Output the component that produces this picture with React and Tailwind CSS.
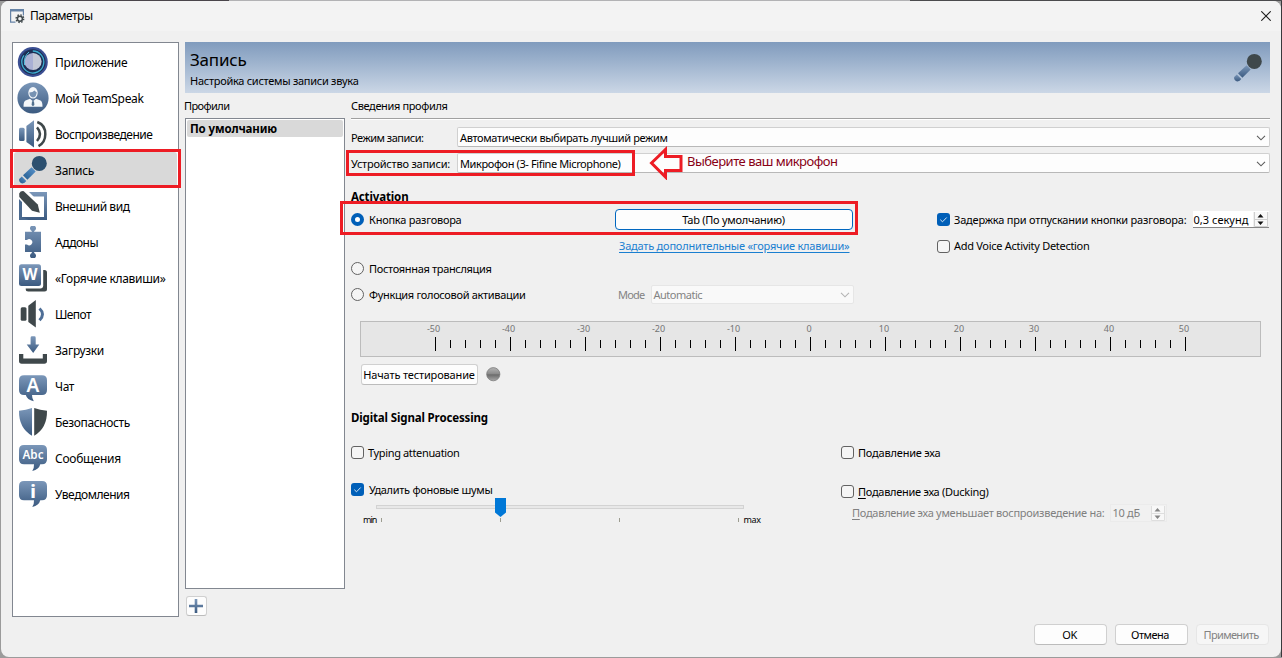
import { useLayoutEffect, useRef, useState } from 'react';

// A single line of text whose tracking is tuned so that it spans a given width.
function Fit({ w, className = '', children }) {
  const ref = useRef(null);
  const [tracking, setTracking] = useState(0);
  useLayoutEffect(() => {
    const el = ref.current;
    const natural = el.getBoundingClientRect().width;
    setTracking((w - 0.5 - natural) / el.textContent.length);
  }, [w]);
  return (
    <span ref={ref} className={`inline-block shrink-0 whitespace-nowrap ${className}`} style={{ letterSpacing: `${tracking}px` }}>
      {children}
    </span>
  );
}

function Gradients() {
  return (
    <svg width="0" height="0" className="absolute">
      <defs>
        <linearGradient id="steel" x1="0" y1="0" x2="0" y2="1">
          <stop offset="0" stopColor="#7b97b9" />
          <stop offset="1" stopColor="#3b5a80" />
        </linearGradient>
        <linearGradient id="blue" x1="1" y1="0" x2="0" y2="1">
          <stop offset="0" stopColor="#5b96cf" />
          <stop offset="1" stopColor="#235a8c" />
        </linearGradient>
        <linearGradient id="led" x1="0" y1="0" x2="0" y2="1">
          <stop offset="0" stopColor="#b5b5b5" />
          <stop offset="0.45" stopColor="#8c8c8c" />
          <stop offset="0.55" stopColor="#6c6c6c" />
          <stop offset="1" stopColor="#a8a8a8" />
        </linearGradient>
        <linearGradient id="disc" x1="0" y1="0" x2="1" y2="0">
          <stop offset="0.5" stopColor="#a9b0d4" />
          <stop offset="0.5" stopColor="#c3c8d6" />
        </linearGradient>
      </defs>
    </svg>
  );
}

const DARK = '#3f484b';

const Mic = ({ head, body }) => (
  <>
    <circle cx="22.3" cy="9.4" r="7.5" fill={head} />
    <path d="M14.6 13.2 18.7 17.6 10.4 25.7 6 21.3Z" fill={body} />
    <path d="M4.8 22.4 9.3 27.1Q7.5 29.9 4.5 29.3 1.6 28.2 2.2 25.1Z" fill={body} />
  </>
);

const icons = {
  app: (
    <>
      <circle cx="15.8" cy="16" r="15" fill="#3b4f93" />
      <circle cx="15.8" cy="16" r="12.8" fill="#1d2f55" />
      <path d="M15.8 5A11 11 0 1 1 7 9.4" fill="none" stroke="#3fb0d3" strokeWidth="1.3" />
      <circle cx="16" cy="15.5" r="8.6" fill="url(#disc)" />
      <path d="M12 6Q6.2 11 7.6 19" fill="none" stroke="#56c0dd" strokeWidth="1" />
    </>
  ),
  user: (
    <>
      <circle cx="16" cy="16" r="15.6" fill="url(#steel)" />
      <ellipse cx="16" cy="10.8" rx="4.7" ry="5.8" fill="#f4f7fa" />
      <path d="M12.3 10.5Q16 10.5 17.5 8.4 19 10 19.7 10.2 19.5 15 16 15.6 12.7 15 12.3 10.5Z" fill="#7793b3" />
      <path d="M6.5 24.8Q6.5 19.5 8.5 18.6L13 16.8 16 19.3 19 16.8 23.5 18.6Q25.5 19.5 25.5 24.8Z" fill="#f4f7fa" />
      <path d="M15 19.3H17L17.4 23 16 24.3 14.6 23Z" fill="#53718f" />
    </>
  ),
  playback: (
    <>
      <rect x="2" y="9.7" width="5.6" height="13.4" rx="1.5" fill="url(#steel)" />
      <path d="M9.4 8 17 2.3V29.6L9.4 23.9Z" fill="url(#steel)" />
      <path d="M20 9.3Q26 16 20 23M20.3 4Q28.5 7 28.3 16.3 28.3 24.5 21.5 28.2" fill="none" stroke={DARK} strokeWidth="2.5" />
    </>
  ),
  mic: <Mic head="#2c5070" body="url(#blue)" />,
  design: (
    <>
      <path d="M2 2H30V30H2ZM5 6.5V27H27V6.5Z" fill="url(#steel)" fillRule="evenodd" />
      <path d="M2 -1 12 2 24.5 14.5V25L14 22.5 -1 8Z" fill="#fff" />
      <path d="M2.2 3.5Q3.5 0.7 6.8 1.2L20.8 14.6 22.8 22.8 15 20.8 2.3 7Z" fill={DARK} />
      <path d="M2 9V30H12L5 27V12Z" fill="#4a6a90" />
    </>
  ),
  addon: (
    <path d="M8 5.8H14.8V5A3 3 0 1 1 17.2 5V5.8H24V26H17.2V27A3 3 0 1 1 14.8 27V26H8V18.5H10A3.1 3.1 0 1 0 10 14H8Z" fill="url(#steel)" />
  ),
  hotkey: (
    <>
      <rect x="8.7" y="8" width="21.3" height="21.6" rx="2.5" fill={DARK} />
      <rect x="1" y="1" width="25.2" height="25.4" rx="3" fill="#fff" />
      <rect x="2" y="2.3" width="22" height="21.7" rx="2.5" fill="url(#steel)" />
      <text x="13" y="18.4" textAnchor="middle" fontSize="16" fontWeight="700" fill="#fff" fontFamily="Noto Sans, sans-serif" textLength="15" lengthAdjust="spacingAndGlyphs">W</text>
    </>
  ),
  whisper: (
    <>
      <rect x="3.7" y="9.3" width="5.8" height="13.4" rx="1.5" fill={DARK} />
      <path d="M11.3 7.8 18.8 2V29.6L11.3 24Z" fill={DARK} />
      <path d="M22.5 10.5Q28.5 16 22.5 22.3" fill="none" stroke="#4f6f97" strokeWidth="3" />
    </>
  ),
  download: (
    <>
      <path d="M13.6 3.7Q13.6 2.3 15 2.3H17.3Q18.7 2.3 18.7 3.7V10.5H22.3L16.2 19 9.7 10.5H13.6Z" fill="url(#steel)" />
      <path d="M2 20H6.3V24.5H25.8V20H30V27Q30 29.7 27.3 29.7H4.7Q2 29.7 2 27Z" fill={DARK} />
    </>
  ),
  chat: (
    <>
      <path d="M7 5.3H25Q30 5.3 30 10.3V20Q30 25 25 25H15Q15 28.5 16.8 31.2 10 29.8 8.8 25H7Q2 25 2 20V10.3Q2 5.3 7 5.3Z" fill="url(#steel)" />
      <text x="16" y="22" textAnchor="middle" fontSize="19" fontWeight="600" fill="#fff" fontFamily="Noto Sans, sans-serif">A</text>
    </>
  ),
  shield: (
    <>
      <path d="M15 2Q9 4 2 4.8 1.7 22 15 29.8Z" fill="url(#steel)" />
      <path d="M17.2 2Q23 4 30 4.8 30.3 22 17.2 29.8Z" fill={DARK} />
    </>
  ),
  messages: (
    <>
      <path d="M7 3H25Q30 3 30 8V17.3Q30 22.3 25 22.3H23.3Q22 27.5 15.3 29 17.3 25.5 17 22.3H7Q2 22.3 2 17.3V8Q2 3 7 3Z" fill="url(#steel)" />
      <text x="16" y="17.3" textAnchor="middle" fontSize="12" fontWeight="600" fill="#fff" fontFamily="Noto Sans, sans-serif" textLength="21" lengthAdjust="spacingAndGlyphs">Abc</text>
    </>
  ),
  notify: (
    <>
      <path d="M7 3H25Q30 3 30 8V17.3Q30 22.3 25 22.3H23.3Q22 27.5 15.3 29 17.3 25.5 17 22.3H7Q2 22.3 2 17.3V8Q2 3 7 3Z" fill="url(#steel)" />
      <text x="16" y="19.5" textAnchor="middle" fontSize="18" fontWeight="800" fill="#fff" fontFamily="Noto Sans, sans-serif">i</text>
    </>
  ),
};

const nav = [
  ['app', 'Приложение', 73],
  ['user', 'Мой TeamSpeak', 89],
  ['playback', 'Воспроизведение', 98],
  ['mic', 'Запись', 39.5],
  ['design', 'Внешний вид', 75],
  ['addon', 'Аддоны', 43.5],
  ['hotkey', '«Горячие клавиши»', 111],
  ['whisper', 'Шепот', 36.5],
  ['download', 'Загрузки', 49.5],
  ['chat', 'Чат', 19.5],
  ['shield', 'Безопасность', 75.5],
  ['messages', 'Сообщения', 66.5],
  ['notify', 'Уведомления', 75],
];

function Radio({ checked }) {
  return checked ? (
    <span className="h-[13px] w-[13px] shrink-0 rounded-full border-4 border-[#005fb8] bg-white" />
  ) : (
    <span className="h-[13px] w-[13px] shrink-0 rounded-full border border-[#626262] bg-[#f5f5f5]" />
  );
}

function Check({ checked }) {
  return checked ? (
    <span className="flex h-[13px] w-[13px] shrink-0 items-center justify-center rounded-[3px] bg-[#005fb8]">
      <svg width="9" height="9" viewBox="0 0 9 9"><path d="M1.3 4.7 3.5 6.8 7.7 2.5" fill="none" stroke="#d5e6f5" strokeWidth="1" /></svg>
    </span>
  ) : (
    <span className="h-[13px] w-[13px] shrink-0 rounded-[3px] border border-[#626262] bg-[#f5f5f5]" />
  );
}

function Chevron({ color }) {
  return (
    <svg width="10" height="6" viewBox="0 0 10 6" className="mt-px shrink-0"><path d="M1 0.8 5 4.8 9 0.8" fill="none" stroke={color} strokeWidth="1.1" /></svg>
  );
}

function Combo({ w, children }) {
  return (
    <div className="flex h-5 grow items-center justify-between rounded-[2px] border border-[#d0d0d0] border-b-[#b8b8b8] bg-[#fdfdfd] pr-[3px] pl-[2px]">
      <Fit w={w} className="pt-0.5">{children}</Fit>
      <Chevron color="#5c5c5c" />
    </div>
  );
}

function Stepper({ color, line }) {
  return (
    <svg width="14" height="15" viewBox="0 0 14 15" className="shrink-0">
      <rect x="0" y="0" width="14" height="15" fill="#f8f8f8" />
      <path d="M0.5 0V14.5H13.5V0M0 7.5H14" fill="none" stroke={line} />
      <path d="M3.5 5.5 6.5 2 9.5 5.5ZM3.5 9.5 6.5 13 9.5 9.5Z" fill={color} />
    </svg>
  );
}

function Meter() {
  const ticks = Array.from({ length: 51 }, (_, i) => i);
  return (
    <svg width="901" height="36" viewBox="0 0 901 36" className="mt-4 ml-[9px] block shrink-0">
      <rect x="0.5" y="0.5" width="900" height="35" fill="#e6e6e6" stroke="#bcbcbc" />
      {ticks.map((i) => {
        const major = i % 5 === 0;
        return <rect key={i} x={75 + i * 15} y={major ? 16 : 19} width="1" height={major ? 14 : 8} fill="#000" />;
      })}
      {ticks.filter((i) => i % 5 === 0).map((i) => (
        <text key={i} x={(i >= 25 ? 74 : 73.5) + i * 15} y="11" textAnchor="middle" fontSize="9" fill="#747474">{i * 2 - 50}</text>
      ))}
    </svg>
  );
}

function Slider() {
  return (
    <div className="flex h-[26px] items-end">
      <Fit w={14} className="ml-3 text-[9px] leading-[12px]">min</Fit>
      <div className="ml-[-1px] flex h-full w-[368px] flex-col">
        <div className="relative mt-[5px] h-1 w-[368px] shrink-0 border border-[#d3d3d3] bg-[#e8e8e8]">
          <svg width="11" height="19" viewBox="0 0 11 19" className="absolute top-[-8px] left-[118px]"><path d="M0 0H11V14.5L5.5 19 0 14.5Z" fill="#0078d7" /></svg>
        </div>
        <div className="mt-[9px] flex justify-between pr-[5px] pl-[5px]">
          <span className="h-1 w-px bg-[#9c9c90]" />
          <span className="h-1 w-px bg-[#9c9c90]" />
          <span className="h-1 w-px bg-[#9c9c90]" />
          <span className="h-1 w-px bg-[#9c9c90]" />
        </div>
      </div>
      <Fit w={17.5} className="text-[9px] leading-[12px]">max</Fit>
    </div>
  );
}

function ProfileDetails() {
  return (
    <section className="ml-[6px] flex w-[919px] flex-col">
      <div className="h-[22px] leading-5"><Fit w={97}>Сведения профиля</Fit></div>
      <div className="h-0.5 shrink-0 border-t border-b border-t-[#a0a0a0] border-b-white" />
      <div className="mt-[7px] flex h-5 items-center"><div className="w-[106px] pt-0.5 leading-5"><Fit w={73}>Режим записи:</Fit></div><Combo w={208}>Автоматически выбирать лучший режим</Combo></div>
      <div className="mt-[6px] flex h-5 items-center"><div className="w-[106px] pt-0.5 leading-5"><Fit w={99.5}>Устройство записи:</Fit></div><Combo w={161}>Микрофон (3- Fifine Microphone)</Combo></div>
      <div className="mt-[13px] h-5 text-[11.5px] leading-[21px] font-bold"><Fit w={58}>Activation</Fit></div>

      <div className="mt-[3px] flex h-[21px] items-center">
        <Radio checked />
        <div className="ml-[5px] w-[246px]"><Fit w={93}>Кнопка разговора</Fit></div>
        <button className="flex h-[21px] w-[238px] items-center justify-center rounded-[4px] border border-[#0067c0] bg-[#fdfdfd] pr-px"><Fit w={103}>Tab (По умолчанию)</Fit></button>
        <div className="ml-[84px] flex items-center gap-1"><Check checked /><Fit w={233}>Задержка при отпускании кнопки разговора:</Fit></div>
        <div className="ml-[6px] flex h-[17px] w-[76px] items-center border-b border-[#868686] bg-white">
          <Fit w={55.5} className="ml-px pt-px">0,3 секунд</Fit>
          <div className="ml-auto flex bg-[#f0f0f0] px-px"><Stepper color="#111" line="#cfcfcf" /></div>
        </div>
      </div>
      <div className="mt-[6px] flex h-5 items-center">
        <div className="w-[318px] pl-[268px]"><Fit w={231} className="text-[#1a7fd0] underline underline-offset-2">Задать дополнительные «горячие клавиши»</Fit></div>
        <div className="ml-[268px] flex items-center gap-1"><Check /><Fit w={136}>Add Voice Activity Detection</Fit></div>
      </div>
      <div className="mt-[2px] flex h-[21px] items-center gap-[5px]"><Radio /><Fit w={123}>Постоянная трансляция</Fit></div>
      <div className="mt-[5px] flex h-[21px] items-center text-[#838383]">
        <Radio />
        <div className="ml-[5px] w-[249px] text-black"><Fit w={157}>Функция голосовой активации</Fit></div>
        <Fit w={27}>Mode</Fit>
        <div className="ml-[6px] flex h-[19px] w-[203px] items-center justify-between rounded-[2px] border border-[#e6e6e6] bg-[#f9f9f9] pr-[3px] pl-[2px]"><Fit w={49}>Automatic</Fit><Chevron color="#b4b4b4" /></div>
      </div>
      <Meter />
      <div className="mt-[7px] flex h-[21px] items-center">
        <button className="ml-[10px] flex h-[21px] w-[117px] items-center justify-center rounded-[3px] border border-[#d0d0d0] border-b-[#bcbcbc] bg-[#fdfdfd] pr-px"><Fit w={112}>Начать тестирование</Fit></button>
        <svg width="15" height="15" viewBox="0 0 15 15" className="ml-2"><circle cx="7.3" cy="7.2" r="6.6" fill="url(#led)" stroke="#7c7c7c" strokeWidth="0.8" /></svg>
      </div>
      <div className="mt-[22px] h-[21px] text-[11.5px] leading-[22px] font-bold"><Fit w={137.5}>Digital Signal Processing</Fit></div>
      <div className="mt-[14px] flex">
        <div className="w-[490px]">
          <div className="flex h-[21px] items-center gap-1"><Check /><Fit w={92}>Typing attenuation</Fit></div>
          <div className="mt-4 flex h-[21px] items-center gap-[5px]"><Check checked /><Fit w={124}>Удалить фоновые шумы</Fit></div>
          <Slider />
        </div>
        <div>
          <div className="flex h-[21px] items-center gap-1"><Check /><Fit w={83}>Подавление эха</Fit></div>
          <div className="mt-[18px] flex h-[21px] items-center gap-1"><Check /><Fit w={131}><u className="underline-offset-2">П</u>одавление эха (Ducking)</Fit></div>
          <div className="mt-px ml-[11px] flex h-5 items-center text-[#808080]">
            <Fit w={253}><u className="underline-offset-2">П</u>одавление эха уменьшает воспроизведение на:</Fit>
            <div className="ml-[5px] flex h-[18px] w-[57px] items-center justify-between border border-[#ebebeb] bg-[#f1f1f1] pr-px pl-[2px]"><Fit w={28}>10 дБ</Fit><Stepper color="#858585" line="#dedede" /></div>
          </div>
        </div>
      </div>
    </section>
  );
}

export default function App() {
  return (
    <div className="relative h-[658px] w-[1282px] overflow-hidden bg-[#9b9b9b] font-['Noto_Sans','DejaVu_Sans',sans-serif] text-[11px] leading-4 text-black">
      <Gradients />
      <div className="flex h-px"><div className="w-[229px] bg-[#4a454b]" /><div className="grow bg-[#b2b2b4]" /><div className="w-[372px] bg-[#4b4b4d]" /></div>
      <div className="flex h-[656px] bg-[#9b9b9b]">
        <main className="ml-px flex w-[1280px] flex-col rounded-[8px] bg-[#f0f0f0]">
          <header className="flex h-[30px] shrink-0 items-center rounded-t-[8px] bg-[#f3f3f3] pr-[10px] pl-[9px]">
            <svg width="15" height="15" viewBox="0 0 15 15">
              <path d="M0 0H14V6.5H12.8V2.6H1.2V12.5H5.5V13.7H0Z" fill="#6683a6" />
              <circle cx="9.9" cy="9.7" r="2.5" fill="none" stroke={DARK} strokeWidth="1.5" />
              <circle cx="9.9" cy="9.7" r="3.8" fill="none" stroke={DARK} strokeWidth="1.4" strokeDasharray="1.49 1.49" />
            </svg>
            <Fit w={63} className="ml-[5px] text-[12px]">Параметры</Fit>
            <svg width="10" height="10" viewBox="0 0 10 10" className="ml-auto"><path d="M0.3 0.3 9.7 9.7M9.7 0.3 0.3 9.7" stroke="#1d1d1d" strokeWidth="1.1" /></svg>
          </header>
          <div className="mt-[11px] flex h-[576px] pl-[11px]">
            <nav className="h-[575px] w-[167px] border border-[#828790] bg-white p-px">
              {nav.map(([id, label, w]) => (
                <div key={id} className={`flex h-9 items-center pl-[3px] text-[12px] ${id === 'mic' ? 'rounded-[3px] bg-[#d9d9d9]' : ''}`}>
                  <svg width="32" height="32" viewBox="0 0 32 32" className="shrink-0">{icons[id]}</svg>
                  <Fit w={w} className="ml-[6px] pt-0.5">{label}</Fit>
                </div>
              ))}
            </nav>
            <div className="ml-[6px] w-[1085px]">
              <div className="flex h-[51px] items-center justify-between bg-linear-to-b from-[#809bbd] to-[#cbd7e6] pr-[6px] pl-[5px]">
                <div className="flex flex-col items-start">
                  <Fit w={57} className="text-[17px] leading-[26px]">Запись</Fit>
                  <Fit w={169} className="leading-4">Настройка системы записи звука</Fit>
                </div>
                <svg width="32" height="32" viewBox="0 0 32 32"><Mic head={DARK} body="url(#steel)" /></svg>
              </div>
              <div className="mt-[3px] flex">
                <section className="w-40">
                  <div className="ml-[-1px] h-[22px] leading-5"><Fit w={46}>Профили</Fit></div>
                  <div className="h-[471px] w-40 border border-[#828790] bg-white p-px">
                    <div className="h-[17px] rounded-[2px] bg-[#d9d9d9] pl-[3px] text-[11.5px] leading-[18px] font-bold"><Fit w={87.5}>По умолчанию</Fit></div>
                  </div>
                  <button className="mt-[7px] ml-px flex h-5 w-[21px] items-center justify-center rounded-[3px] border border-[#d0d0d0] border-b-[#bcbcbc] bg-[#fdfdfd] pr-px">
                    <svg width="14" height="14" viewBox="0 0 14 14"><path d="M5.7 0H8.3V5.7H14V8.3H8.3V14H5.7V8.3H0V5.7H5.7Z" fill="url(#steel)" /></svg>
                  </button>
                </section>
                <ProfileDetails />
              </div>
            </div>
          </div>
          <footer className="mt-[6px] flex h-[21px] justify-end gap-2 pr-[12px]">
            <button className="flex w-[73px] items-center justify-center rounded-[4px] border border-[#d0d0d0] border-b-[#bcbcbc] bg-[#fdfdfd] pr-0.5"><Fit w={15}>OK</Fit></button>
            <button className="flex w-[73px] items-center justify-center rounded-[4px] border border-[#d0d0d0] border-b-[#bcbcbc] bg-[#fdfdfd] pr-[3px]"><Fit w={38.5}>Отмена</Fit></button>
            <button className="flex w-[73px] items-center justify-center rounded-[4px] border border-[#e6e6e6] bg-[#f6f6f6] pr-[3px] text-[#838383]"><Fit w={55.5}>Применить</Fit></button>
          </footer>
        </main>
        <div className="w-px bg-[#39393c]" />
      </div>

      {/* Annotations drawn over the window */}
      <div className="absolute top-[149px] left-[10px] h-[39px] w-[171px] border-3 border-[#ed1c24]" />
      <div className="absolute top-[150px] left-[346px] h-[26px] w-[289px] border-3 border-[#ed1c24]" />
      <div className="absolute top-[201px] left-[340px] h-[34px] w-[518px] border-3 border-[#ed1c24]" />
      <div className="absolute top-[146px] left-[648px] flex h-[34px]">
        <svg width="36" height="34" viewBox="0 0 36 34"><path d="M3.5 17 17.5 3.5V10.5H33V24.5H17.5V31Z" fill="none" stroke="#ed1c24" strokeWidth="3" /></svg>
        <Fit w={151} className="ml-[3px] text-[13px] leading-[31px] text-[#880015]">Выберите ваш микрофон</Fit>
      </div>
    </div>
  );
}
